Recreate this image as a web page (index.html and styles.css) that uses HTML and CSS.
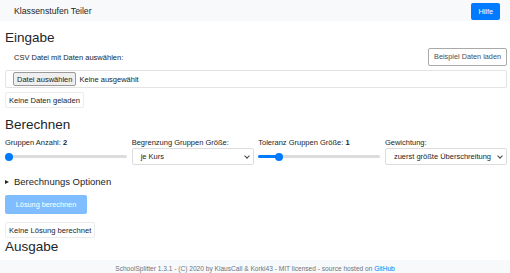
FILE: index.html
```html
<!DOCTYPE html>
<html lang="de">
  <head>
    <meta charset="UTF-8" />
    <meta name="viewport" content="width=device-width, initial-scale=1.0" />
    <title>Klassenstufen Teiler</title>
    <link rel="stylesheet" href="styles.css">
  </head>
  <body>
    <nav class="navbar">
      <span class="brand">Klassenstufen Teiler</span>
      <button class="btn btn-primary">Hilfe</button>
    </nav>

    <main class="content">
      <h2>Eingabe</h2>
      <div class="csv-row">
        <label class="csv-label">CSV Datei mit Daten auswählen:</label>
        <button class="btn btn-outline">Beispiel Daten laden</button>
      </div>
      <div class="file-box">
        <span class="file-btn">Datei auswählen</span>
        <span class="file-name">Keine ausgewählt</span>
      </div>
      <div class="status">Keine Daten geladen</div>

      <h2 class="mt">Berechnen</h2>
      <div class="settings">
        <div class="field">
          <label>Gruppen Anzahl: <b>2</b></label>
          <div class="range"><span class="thumb" style="left: 0%"></span></div>
        </div>
        <div class="field">
          <label>Begrenzung Gruppen Größe:</label>
          <div class="select">je Kurs<span class="caret"></span></div>
        </div>
        <div class="field">
          <label>Toleranz Gruppen Größe: <b>1</b></label>
          <div class="range"><span class="fill" style="width: 16%"></span><span class="thumb" style="left: 14%"></span></div>
        </div>
        <div class="field">
          <label>Gewichtung:</label>
          <div class="select">zuerst größte Überschreitung<span class="caret"></span></div>
        </div>
      </div>

      <div class="summary"><span class="tri"></span>Berechnungs Optionen</div>
      <button class="btn btn-disabled">Lösung berechnen</button>
      <div class="status status-2">Keine Lösung berechnet</div>
      <h2 class="out">Ausgabe</h2>
    </main>

    <footer class="footer">
      SchoolSplitter 1.3.1 - (C) 2020 by KlausCall &amp; Korki43 - MIT licensed - source hosted on <a href="#">GitHub</a>
    </footer>
  </body>
</html>
```

FILE: styles.css
```css
body {
  margin: 0;
  font-family: "Liberation Sans", Arial, sans-serif;
  color: #212529;
  font-size: 7.5px;
  background: #fff;
}
.navbar {
  height: 21px;
  background: #f8f9fa;
  display: flex;
  align-items: center;
  justify-content: space-between;
  padding: 0 10px 0 14px;
}
.brand {
  font-size: 8.7px;
}
.btn {
  font-family: inherit;
  font-size: 7.3px;
  border-radius: 2px;
  border: 1px solid transparent;
  padding: 0 6px;
  height: 18px;
  line-height: 16px;
}
.btn-primary {
  background: #007bff;
  color: #fff;
  height: 17px;
  margin-top: 1px;
}
.btn-outline {
  background: #fff;
  border-color: #a9a9a9;
  color: #495057;
  padding: 0 5px;
}
.btn-disabled {
  display: block;
  background: #7fbdff;
  color: #fff;
  width: 82px;
  padding: 0;
  height: 19px;
  margin-top: 8px;
}
.content {
  padding: 0 3px 0 5px;
}
h2 {
  font-weight: normal;
  font-size: 13.5px;
  margin: 9px 0 0;
  line-height: 16px;
}
.mt {
  margin-top: 9px;
}
.csv-row {
  display: flex;
  justify-content: space-between;
  align-items: center;
  margin-top: 2px;
}
.csv-label {
  padding-left: 9px;
}
.file-box {
  margin-top: 4px;
  height: 18px;
  border: 1px solid #e3e3e3;
  border-radius: 2px;
  display: flex;
  align-items: center;
  padding-left: 7px;
  box-sizing: border-box;
}
.file-btn {
  background: #efefef;
  border: 1px solid #9a9a9a;
  border-radius: 2px;
  padding: 0 3px;
  height: 14px;
  line-height: 13px;
  box-sizing: border-box;
}
.file-name {
  margin-left: 3px;
}
.status {
  display: inline-block;
  margin-top: 4px;
  border: 1px solid #ececec;
  border-radius: 2px;
  padding: 0 3px;
  height: 16px;
  line-height: 15px;
  box-sizing: border-box;
  font-size: 7.6px;
}
.settings {
  display: grid;
  grid-template-columns: repeat(4, 1fr);
  column-gap: 4.5px;
  margin-top: 5px;
}
.field label {
  display: block;
  height: 10px;
  line-height: 10px;
}
.range {
  position: relative;
  margin-top: 7px;
  height: 3px;
  background: #dcdcdc;
  border-radius: 2px;
}
.fill {
  position: absolute;
  left: 0;
  top: 0;
  height: 3px;
  background: #007bff;
  border-radius: 2px;
}
.thumb {
  position: absolute;
  top: -2.5px;
  width: 8px;
  height: 8px;
  border-radius: 50%;
  background: #007bff;
}
.select {
  position: relative;
  height: 17px;
  line-height: 16px;
  border: 1px solid #ddd;
  border-radius: 2px;
  padding-left: 8px;
  box-sizing: border-box;
}
.caret {
  position: absolute;
  right: 4px;
  top: 5px;
  width: 3px;
  height: 3px;
  border-right: 1px solid #444;
  border-bottom: 1px solid #444;
  transform: rotate(45deg);
}
.summary {
  margin-top: 11px;
  font-size: 9.5px;
  display: flex;
  align-items: center;
}
.tri {
  width: 0;
  height: 0;
  border-left: 4px solid #222;
  border-top: 2.5px solid transparent;
  border-bottom: 2.5px solid transparent;
  margin-right: 5px;
}
.status-2 {
  margin-top: 8px;
}
.out {
  margin-top: 1px;
}
.footer {
  margin-top: 5px;
  background: #f8f9fa;
  height: 17px;
  line-height: 17px;
  text-align: center;
  font-size: 6.6px;
  color: #6c757d;
}
.footer a {
  color: #007bff;
  text-decoration: none;
}
```
